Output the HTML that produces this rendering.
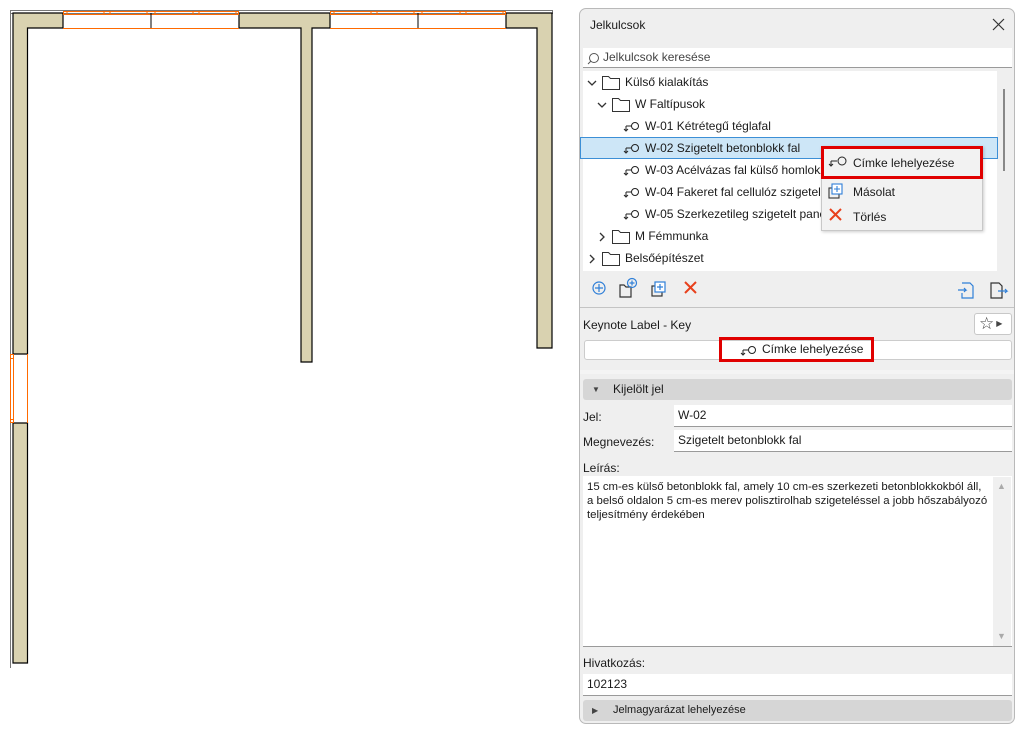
<!DOCTYPE html>
<html><head><meta charset="utf-8"><style>
*{box-sizing:border-box;margin:0;padding:0}
body{width:1020px;height:730px;background:#fff;position:relative;overflow:hidden;font-family:"Liberation Sans",sans-serif;font-size:12px;color:#1a1a1a}
.a{position:absolute;white-space:nowrap}
.panel{position:absolute;left:579px;top:8px;width:436px;height:716px;background:#efefef;border:1px solid #b9b9b9;border-radius:7px;overflow:hidden}
.fld{position:absolute;background:#fff;border-bottom:1px solid #9a9a9a;padding-left:4px;line-height:21px}
.hdr{position:absolute;left:3px;width:429px;height:21px;background:#d6d6d6;border-radius:3px;line-height:21px;padding-left:30px}
</style></head><body>
<svg class="a" style="left:0;top:0" width="570" height="680">
<rect x="10.5" y="10.5" width="542" height="3" fill="none" stroke="#777"/>
<line x1="10.5" y1="10" x2="10.5" y2="668" stroke="#777"/>
<path d="M13 13 H63 V28 H27.5 V354 H13 Z" fill="#d9d2b0" stroke="#000" stroke-width="1.2"/>
<path d="M13 423 H27.5 V663 H13 Z" fill="#d9d2b0" stroke="#000" stroke-width="1.2"/>
<path d="M239 13 H330 V28 H312 V362 H301 V28 H239 Z" fill="#d9d2b0" stroke="#000" stroke-width="1.2"/>
<path d="M506 13 H552 V348 H537 V28 H506 Z" fill="#d9d2b0" stroke="#000" stroke-width="1.2"/>
<g stroke="#ff6a00" fill="none" stroke-width="1">
<line x1="63" y1="28.5" x2="239" y2="28.5"/><line x1="330" y1="28.5" x2="506" y2="28.5"/>
<rect x="63.5" y="11.5" width="175" height="3"/><rect x="330.5" y="11.5" width="175" height="3"/>
<line x1="67" y1="11" x2="67" y2="14"/><line x1="104" y1="11" x2="104" y2="14"/><line x1="110" y1="11" x2="110" y2="14"/><line x1="147" y1="11" x2="147" y2="14"/><line x1="155" y1="11" x2="155" y2="14"/><line x1="193" y1="11" x2="193" y2="14"/><line x1="199" y1="11" x2="199" y2="14"/><line x1="236" y1="11" x2="236" y2="14"/>
<line x1="334" y1="11" x2="334" y2="14"/><line x1="371" y1="11" x2="371" y2="14"/><line x1="377" y1="11" x2="377" y2="14"/><line x1="414" y1="11" x2="414" y2="14"/><line x1="422" y1="11" x2="422" y2="14"/><line x1="460" y1="11" x2="460" y2="14"/><line x1="466" y1="11" x2="466" y2="14"/><line x1="503" y1="11" x2="503" y2="14"/>
<rect x="10.5" y="354.5" width="3" height="68"/><line x1="27.5" y1="354" x2="27.5" y2="423"/>
<line x1="10" y1="358.5" x2="14" y2="358.5"/><line x1="10" y1="419.5" x2="14" y2="419.5"/>
</g>
<line x1="151" y1="13" x2="151" y2="28" stroke="#000"/><line x1="418" y1="13" x2="418" y2="28" stroke="#000"/>
</svg>

<div class="panel">
 <div class="a" style="left:10px;top:9px;font-size:12px">Jelkulcsok</div>
 <svg class="a" style="left:412px;top:9px" width="14" height="14"><path d="M1 1 L12 12 M12 1 L1 12" stroke="#333" stroke-width="1.2"/></svg>
 <div class="fld" style="left:3px;top:39px;width:429px;height:20px;line-height:19px;padding-left:20px;color:#444">Jelkulcsok keresése</div>
 <svg class="a" style="left:7px;top:43px" width="14" height="14"><circle cx="7" cy="6" r="4.5" fill="none" stroke="#555"/><line x1="4" y1="9" x2="1" y2="12" stroke="#555"/></svg>
 <div class="a" style="left:3px;top:62px;width:414px;height:200px;background:#fff"></div>
 <div class="a" style="left:423px;top:80px;width:2px;height:82px;background:#888"></div>
 <div class="a" style="left:0;top:128px;width:418px;height:22px;background:#cde6f7;border:1px solid #3c8fd6"></div>
 <svg class="a" style="left:0;top:62px" width="420" height="200">
  <g fill="none" stroke="#333" stroke-width="1.3">
   <path d="M8 10 l4 4 l4 -4"/><path d="M18 32 l4 4 l4 -4"/><path d="M20 162 l4 4 l-4 4"/><path d="M10 184 l4 4 l-4 4"/>
  </g>
  <g fill="#fff" stroke="#333">
   <path d="M22.5 5.5 h6 l2 2 h9 v11 h-17 z"/><path d="M32.5 27.5 h6 l2 2 h9 v11 h-17 z"/><path d="M32.5 159.5 h6 l2 2 h9 v11 h-17 z"/><path d="M22.5 181.5 h6 l2 2 h9 v11 h-17 z"/>
  </g>
  <g fill="none" stroke="#222">
   <g transform="translate(43,50)"><circle cx="12" cy="5" r="3.5"/><line x1="8" y1="5" x2="3" y2="5"/><path d="M3 5 v4 M1 8 l2 2 l2 -2" /></g>
   <g transform="translate(43,72)"><circle cx="12" cy="5" r="3.5"/><line x1="8" y1="5" x2="3" y2="5"/><path d="M3 5 v4 M1 8 l2 2 l2 -2" /></g>
   <g transform="translate(43,94)"><circle cx="12" cy="5" r="3.5"/><line x1="8" y1="5" x2="3" y2="5"/><path d="M3 5 v4 M1 8 l2 2 l2 -2" /></g>
   <g transform="translate(43,116)"><circle cx="12" cy="5" r="3.5"/><line x1="8" y1="5" x2="3" y2="5"/><path d="M3 5 v4 M1 8 l2 2 l2 -2" /></g>
   <g transform="translate(43,138)"><circle cx="12" cy="5" r="3.5"/><line x1="8" y1="5" x2="3" y2="5"/><path d="M3 5 v4 M1 8 l2 2 l2 -2" /></g>
  </g>
 </svg>
 <div class="a" style="left:45px;top:66px">Külső kialakítás</div>
 <div class="a" style="left:55px;top:88px">W Faltípusok</div>
 <div class="a" style="left:65px;top:110px">W-01 Kétrétegű téglafal</div>
 <div class="a" style="left:65px;top:132px">W-02 Szigetelt betonblokk fal</div>
 <div class="a" style="left:65px;top:154px">W-03 Acélvázas fal külső homlokza</div>
 <div class="a" style="left:65px;top:176px">W-04 Fakeret fal cellulóz szigetelés</div>
 <div class="a" style="left:65px;top:198px">W-05 Szerkezetileg szigetelt panel</div>
 <div class="a" style="left:55px;top:220px">M Fémmunka</div>
 <div class="a" style="left:45px;top:242px">Belsőépítészet</div>
 <svg class="a" style="left:8px;top:268px" width="425" height="22">
  <g fill="none" stroke="#2f7fd8" stroke-width="1.2">
   <circle cx="11" cy="11" r="6"/><path d="M11 7 v8 M7 11 h8"/>
   <path d="M32 8 h4 l2 2 h5 v10 h-11 z" stroke="#333"/><circle cx="44" cy="6" r="4.5"/><path d="M44 3.5v5M41.5 6h5"/>
   <rect x="64" y="9" width="10" height="10" stroke="#333"/><rect x="67" y="5" width="10" height="10" fill="#fff"/><path d="M72 7v6M69 10h6"/>
   <path d="M374 6 h8 l3 3 v12 h-11 v-5"/><path d="M370 13 h8 l-2 -2 m2 2 l-2 2"/>
   <path d="M403 6 h8 l3 3 v12 h-11 z" stroke="#333"/><path d="M410 14 h9 l-2 -2 m2 2 l-2 2"/>
  </g>
  <path d="M97 5 l11 11 M108 5 l-11 11" stroke="#e8401c" stroke-width="2"/>
 </svg>
 <div class="a" style="left:0;top:298px;width:436px;height:1px;background:#c4c4c4"></div>
 <div class="a" style="left:3px;top:309px">Keynote Label - Key</div>
 <div class="a" style="left:394px;top:304px;width:38px;height:22px;background:#fff;border:1px solid #c8c8c8;border-radius:3px;font-size:17px;line-height:20px;padding-left:4px;color:#444">☆<span style="font-size:8px;vertical-align:3px;margin-left:2px">▶</span></div>
 <div class="a" style="left:4px;top:331px;width:428px;height:20px;background:#fff;border:1px solid #ccc;border-radius:3px"></div>
 <div class="a" style="left:139px;top:328px;width:155px;height:25px;border:3px solid #e00000;line-height:19px;padding-left:40px">Címke lehelyezése</div>
 <svg class="a" style="left:160px;top:336px" width="20" height="12"><g fill="none" stroke="#222"><circle cx="12" cy="5" r="3.5"/><line x1="8" y1="5" x2="3" y2="5"/><path d="M3 5 v4 M1 8 l2 2 l2 -2"/></g></svg>
 <div class="a" style="left:0;top:361px;width:436px;height:4px;background:#f4f4f4"></div>
 <div class="hdr" style="top:370px"><span style="position:absolute;left:9px;font-size:8px;color:#444">▼</span>Kijelölt jel</div>
 <div class="a" style="left:3px;top:401px">Jel:</div>
 <div class="fld" style="left:94px;top:396px;width:338px;height:22px">W-02</div>
 <div class="a" style="left:3px;top:426px">Megnevezés:</div>
 <div class="fld" style="left:94px;top:421px;width:338px;height:22px">Szigetelt betonblokk fal</div>
 <div class="a" style="left:3px;top:452px">Leírás:</div>
 <div class="fld" style="left:3px;top:467px;width:429px;height:171px;padding:4px;line-height:14px;padding-right:22px;font-size:11.4px">15 cm-es külső betonblokk fal, amely 10 cm-es szerkezeti betonblokkokból áll,<br>a belső oldalon 5 cm-es merev polisztirolhab szigeteléssel a jobb hőszabályozó<br>teljesítmény érdekében</div>
 <div class="a" style="left:413px;top:468px;width:18px;height:169px;background:#f0f0f0"></div>
 <div class="a" style="left:417px;top:472px;font-size:9px;color:#aaa">▲</div>
 <div class="a" style="left:417px;top:622px;font-size:9px;color:#aaa">▼</div>
 <div class="a" style="left:3px;top:647px">Hivatkozás:</div>
 <div class="fld" style="left:3px;top:665px;width:429px;height:22px">102123</div>
 <div class="hdr" style="top:691px;font-size:11px"><span style="position:absolute;left:9px;font-size:8px;color:#444">▶</span>Jelmagyarázat lehelyezése</div>
</div>

<div class="a" style="left:821px;top:146px;width:162px;height:85px;background:#f2f2f2;border:1px solid #c8c8c8;box-shadow:1px 1px 3px rgba(0,0,0,.2)"></div>
<div class="a" style="left:821px;top:146px;width:162px;height:33px;border:3px solid #e00000"></div>
<div class="a" style="left:853px;top:156px">Címke lehelyezése</div>
<div class="a" style="left:853px;top:185px">Másolat</div>
<div class="a" style="left:853px;top:210px">Törlés</div>
<svg class="a" style="left:826px;top:152px" width="26" height="75">
 <g fill="none" stroke="#222"><circle cx="16" cy="9" r="4"/><line x1="11" y1="9" x2="5" y2="9"/><path d="M5 9 v4 M3 12 l2 2 l2 -2"/></g>
 <g fill="none" stroke="#2f7fd8" stroke-width="1.1"><rect x="3" y="36" width="10" height="10" stroke="#333"/><rect x="6" y="32" width="10" height="10" fill="#fff"/><path d="M11 34v6M8 37h6"/></g>
 <path d="M4 57 l11 11 M15 57 l-11 11" stroke="#e8401c" stroke-width="2"/>
</svg>
</body></html>
